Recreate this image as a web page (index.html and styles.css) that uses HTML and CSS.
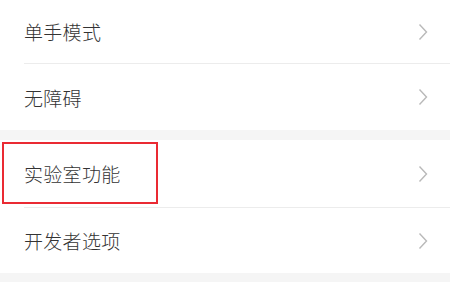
FILE: index.html
```html
<!DOCTYPE html>
<html lang="zh-CN">
<head>
<meta charset="utf-8">
<link rel="stylesheet" href="styles.css">
</head>
<body>
<div class="list">
  <div class="group">
    <div class="row r1"><span class="label">单手模式</span><svg class="chev" viewBox="0 0 10 18"><path d="M1.5 1.5 L8.5 9 L1.5 16.5"/></svg></div>
    <div class="divider"></div>
    <div class="row r2"><span class="label">无障碍</span><svg class="chev" viewBox="0 0 10 18"><path d="M1.5 1.5 L8.5 9 L1.5 16.5"/></svg></div>
  </div>
  <div class="gap g1"></div>
  <div class="group">
    <div class="row r3"><span class="label">实验室功能</span><svg class="chev" viewBox="0 0 10 18"><path d="M1.5 1.5 L8.5 9 L1.5 16.5"/></svg><div class="highlight"></div></div>
    <div class="divider"></div>
    <div class="row r4"><span class="label">开发者选项</span><svg class="chev" viewBox="0 0 10 18"><path d="M1.5 1.5 L8.5 9 L1.5 16.5"/></svg></div>
  </div>
  <div class="gap g2"></div>
</div>
</body>
</html>
```
FILE: styles.css
```css
html, body {
  margin: 0;
  padding: 0;
  background: #ffffff;
}
body {
  width: 450px;
  height: 282px;
  overflow: hidden;
  font-family: "Noto Sans CJK SC", "Noto Sans", sans-serif;
}
.list {
  display: flex;
  flex-direction: column;
}
.group {
  display: flex;
  flex-direction: column;
  background: #ffffff;
}
.row {
  position: relative;
  display: flex;
  align-items: center;
  justify-content: space-between;
  padding: 0 22px 0 24px;
  box-sizing: border-box;
}
.r1 { height: 63px; }
.r2 { height: 66px; }
.r3 { height: 67px; }
.r4 { height: 65px; }
.label {
  font-size: 19px;
  font-weight: 300;
  color: #333333;
  letter-spacing: 0.3px;
  line-height: 1;
}
.chev {
  width: 10px;
  height: 18px;
  fill: none;
  stroke: #b9b9b9;
  stroke-width: 1.4;
}
.divider {
  height: 1px;
  margin-left: 24px;
  background: #ececec;
}
.gap {
  background: #f5f5f5;
}
.g1 { height: 10px; }
.g2 { height: 9px; }
.highlight {
  position: absolute;
  left: 2px;
  top: 2px;
  width: 156px;
  height: 62px;
  box-sizing: border-box;
  border: 2px solid #ea2a33;
}
```
